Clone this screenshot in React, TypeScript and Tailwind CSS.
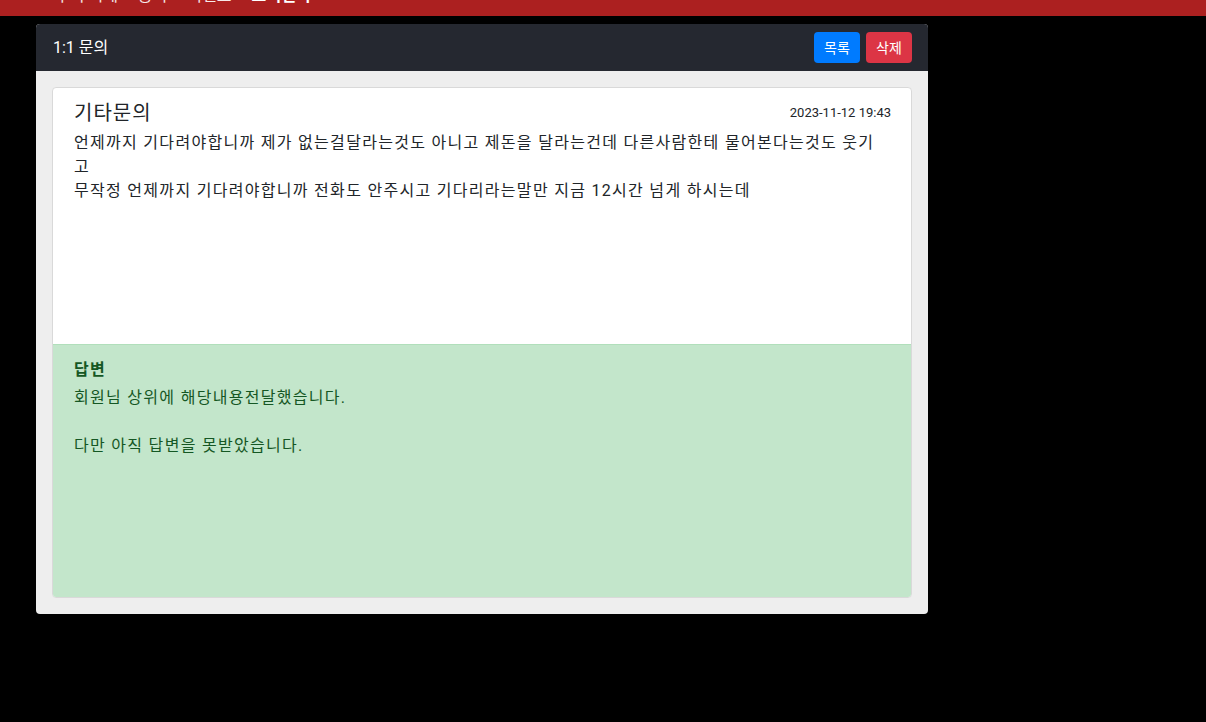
const KR = "font-['Roboto','Noto_Sans_CJK_KR',sans-serif]";

const NAV_ITEMS = [
  { label: '주식 시세', active: false },
  { label: '공지', active: false },
  { label: '이벤트', active: false },
  { label: '고객센터', active: true },
];

function TopBar() {
  return (
    <div className="h-[16px] overflow-hidden bg-[#ac2020]">
      <div className="-mt-[14px] flex items-center gap-5 pl-[55px]">
        {NAV_ITEMS.map((item) => (
          <span
            className={
              item.active
                ? 'text-base leading-5 font-bold text-white'
                : 'text-base leading-5 text-white/90'
            }
            key={item.label}
          >
            {item.label}
          </span>
        ))}
      </div>
    </div>
  );
}

function InquiryCard() {
  return (
    <div className="w-[892px] overflow-hidden rounded bg-[#eeeeee]">
      <div className="flex h-[47px] items-center justify-between bg-[#252830] pr-4 pl-[17px]">
        <p className="text-base text-white">1:1 문의</p>
        <div className="flex gap-1.5">
          <button
            className="h-[31px] w-[46px] rounded bg-[#007bff] text-sm text-white"
            type="button"
          >
            목록
          </button>
          <button
            className="h-[31px] w-[46px] rounded bg-[#dc3545] text-sm text-white"
            type="button"
          >
            삭제
          </button>
        </div>
      </div>

      <div className="p-4">
        <div className="overflow-hidden rounded border border-[#d9d9d9] bg-white">
          <div className="h-[256px] pr-[20px] pl-[21px] pt-[12px]">
            <div className="flex items-center justify-between">
              <h2 className="text-xl leading-[26px] tracking-[1px] text-[#212529]">기타문의</h2>
              <span className="text-[13px] text-[#212529]">2023-11-12 19:43</span>
            </div>
            <p className="mt-[5px] pr-[8px] text-base leading-6 tracking-[1.3px] text-[#212529]">
              언제까지 기다려야합니까 제가 없는걸달라는것도 아니고 제돈을 달라는건데 다른사람한테 물어본다는것도 웃기고
              <br />
              무작정 언제까지 기다려야합니까 전화도 안주시고 기다리라는말만 지금 12시간 넘게 하시는데
            </p>
          </div>
          <div className="h-[253px] border-t border-[#b1dfbb] bg-[#c3e6cb] px-[21px] pt-[13px] tracking-[1.3px] text-[#155724]">
            <p className="text-base leading-6 font-bold">답변</p>
            <p className="mt-[4px] text-base leading-6">
              회원님 상위에 해당내용전달했습니다.
              <br />
              <br />
              다만 아직 답변을 못받았습니다.
            </p>
          </div>
        </div>
      </div>
    </div>
  );
}

export default function App() {
  return (
    <div className={`min-h-screen bg-black ${KR}`}>
      <TopBar />
      <div className="pt-2 pl-9">
        <InquiryCard />
      </div>
    </div>
  );
}
